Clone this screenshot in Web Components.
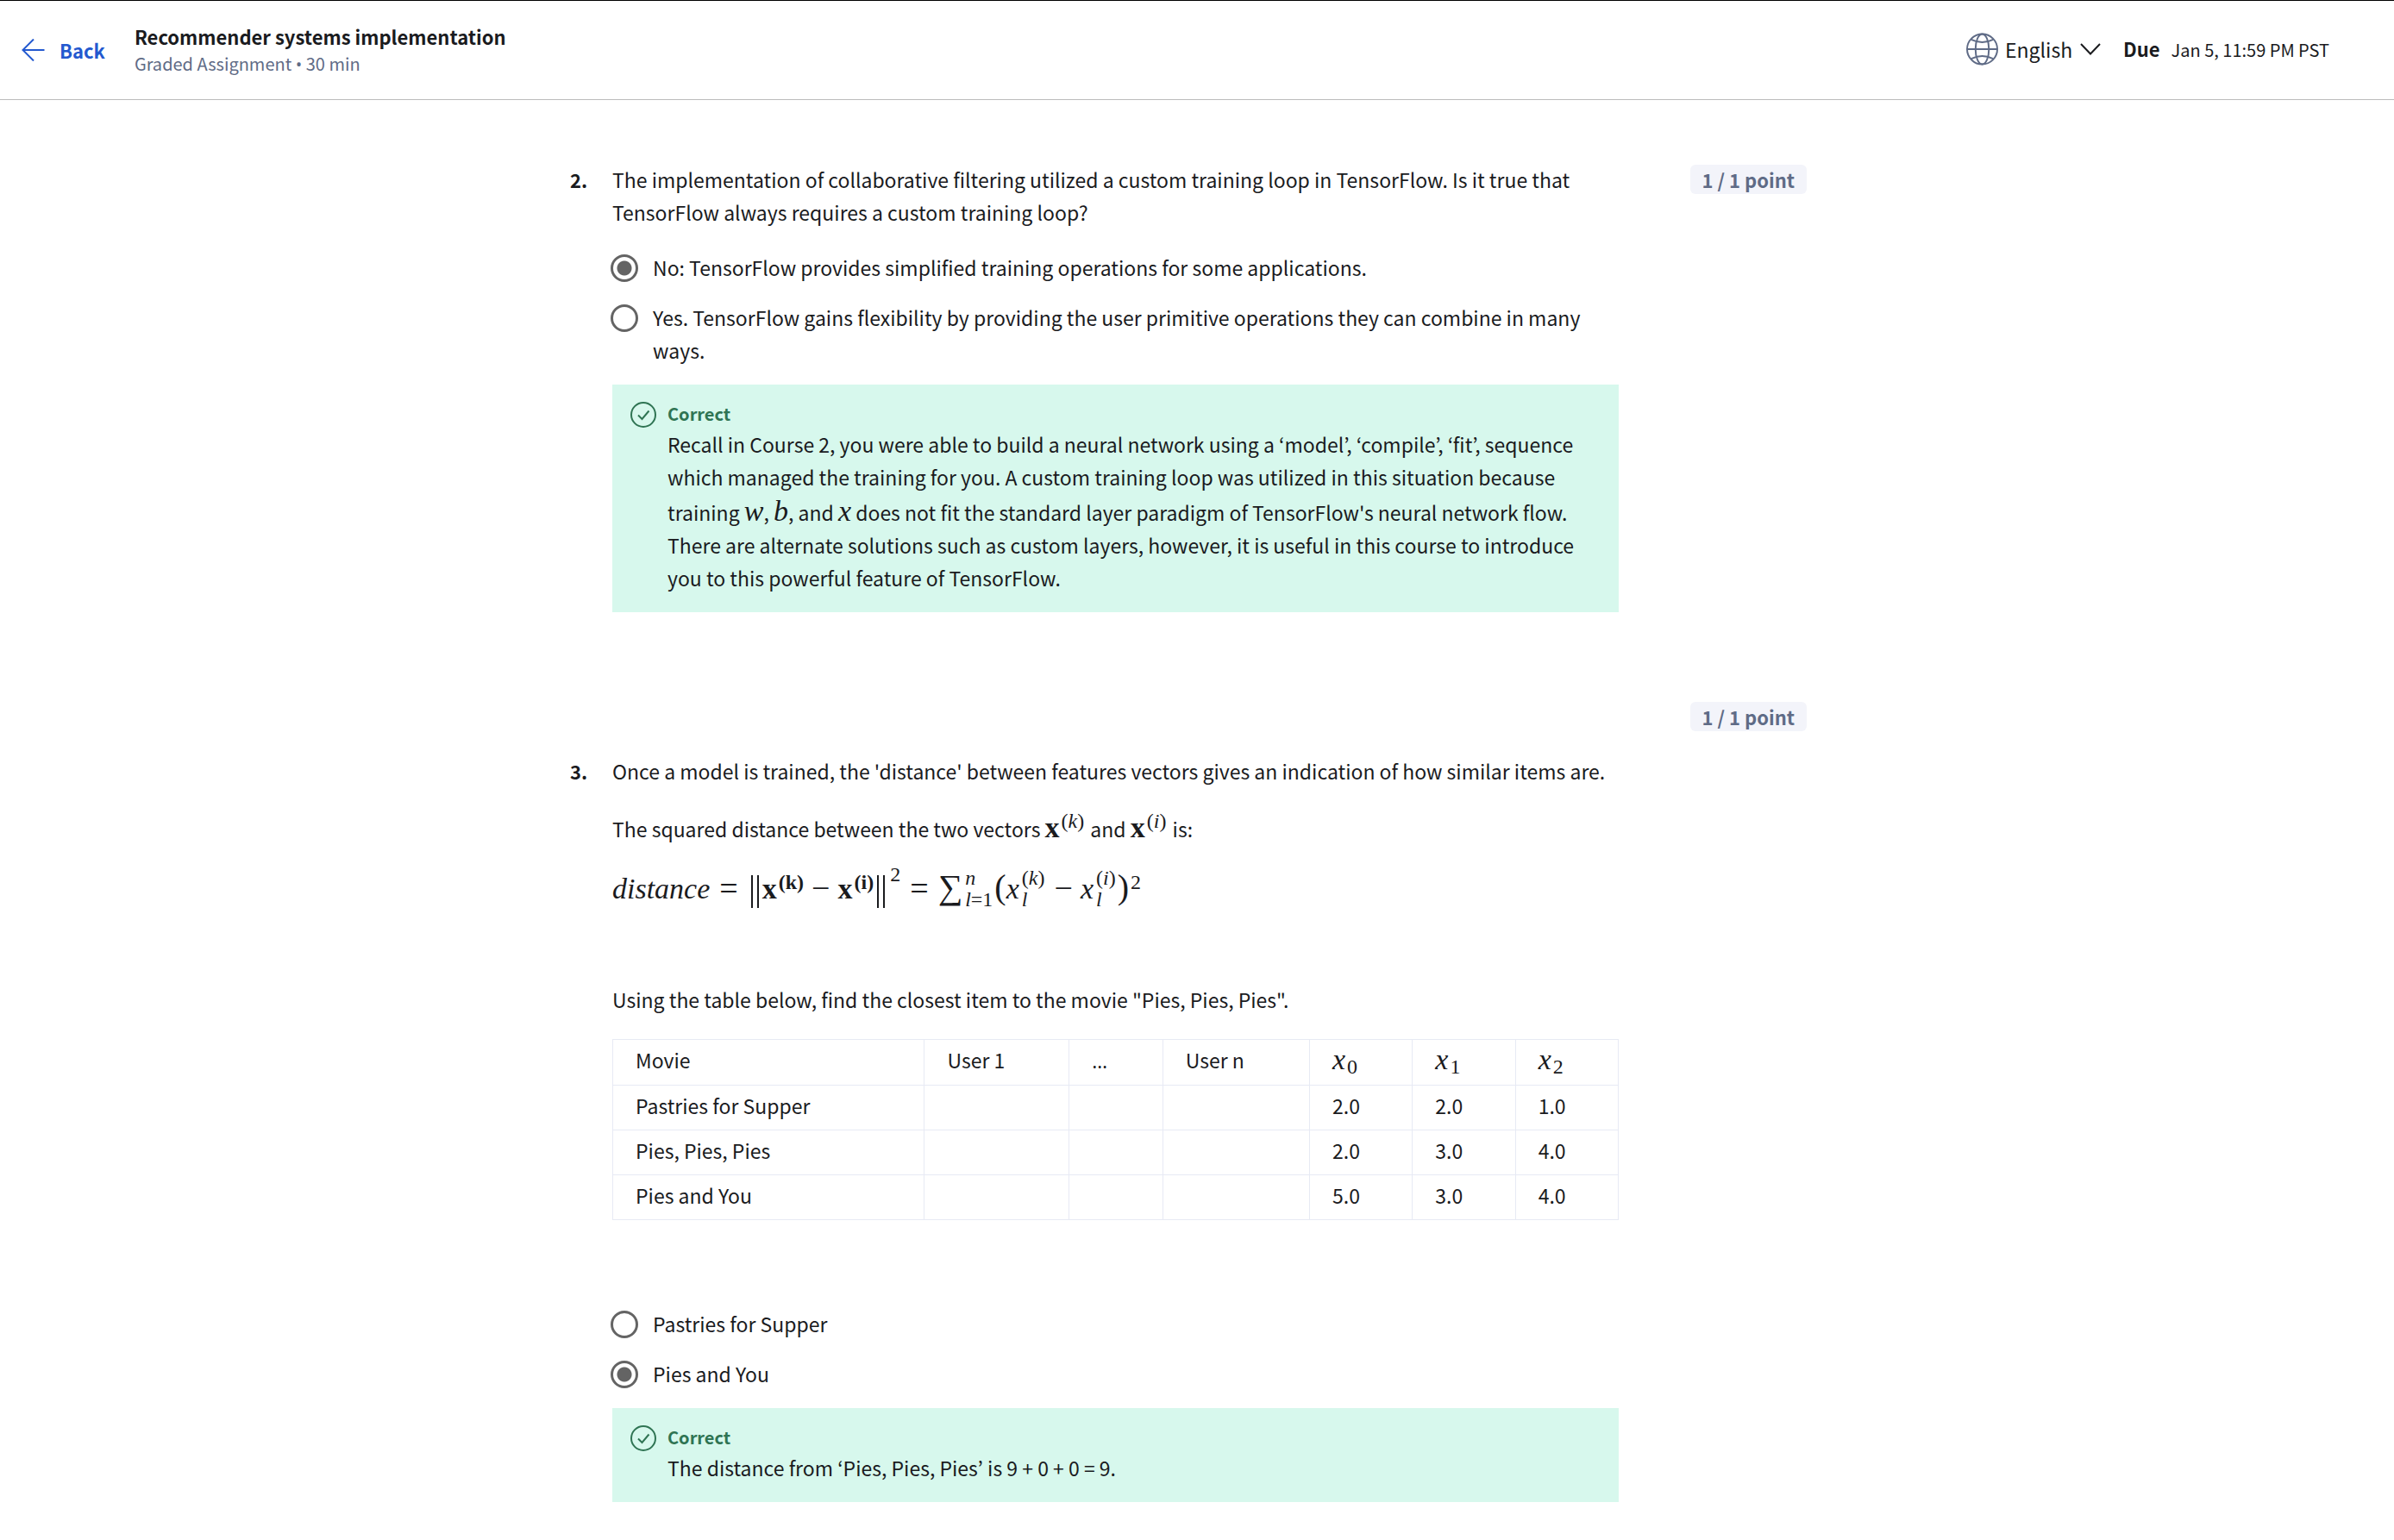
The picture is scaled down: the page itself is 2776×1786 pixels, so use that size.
<!DOCTYPE html>
<html lang="en">
<head>
<meta charset="utf-8">
<meta name="viewport" content="width=device-width, initial-scale=1">
<title>Recommender systems implementation</title>
<style>
  body {
    margin: 0;
    background: #fff;
    color: #1a1b1e;
    font: 400 23px/38px "Noto Sans CJK KR", "Noto Sans", sans-serif;
    --ink-soft: #5f6b86;
    --blue: #2359cf;
    --green: #2f7453;
    --green-bg: #d7f8ed;
    --chip-bg: #f3f4fa;
    --rule: #e7eaf4;
    --ring: #646464;
  }
  p { margin: 0 0 26px; }
  .dot { font-family: "Open Sans", sans-serif; line-height: 1; }
</style>
</head>
<body>
<quiz-page>
  <quiz-header slot="header" heading="Recommender systems implementation" due="Jan 5, 11:59 PM PST">Graded Assignment <span class="dot">•</span> 30 min</quiz-header>

  <quiz-question number="2." points="1 / 1 point">
    <p>The implementation of collaborative filtering utilized a custom training loop in TensorFlow. Is it true that TensorFlow always requires a custom training loop?</p>
    <quiz-choices slot="choices" name="q2" chosen="0"
      options='["No: TensorFlow provides simplified training operations for some applications.","Yes. TensorFlow gains flexibility by providing the user primitive operations they can combine in many ways."]'></quiz-choices>
    <quiz-feedback slot="feedback">Recall in Course 2, you were able to build a neural network using a ‘model’, ‘compile’, ‘fit’, sequence which managed the training for you. A custom training loop was utilized in this situation because training <math-term base="w"></math-term>, <math-term base="b"></math-term>, and <math-term base="x"></math-term> does not fit the standard layer paradigm of TensorFlow's neural network flow. There are alternate solutions such as custom layers, however, it is useful in this course to introduce you to this powerful feature of TensorFlow.</quiz-feedback>
  </quiz-question>

  <quiz-question number="3." points="1 / 1 point" spaced>
    <p>Once a model is trained, the 'distance' between features vectors gives an indication of how similar items are.</p>
    <p>The squared distance between the two vectors <math-term bold base="x" sup="k"></math-term> and <math-term bold base="x" sup="i"></math-term> is:</p>
    <distance-formula></distance-formula>
    <p>Using the table below, find the closest item to the movie "Pies, Pies, Pies".</p>
    <movie-table></movie-table>
    <quiz-choices slot="choices" name="q3" chosen="1" options='["Pastries for Supper","Pies and You"]'></quiz-choices>
    <quiz-feedback slot="feedback">The distance from ‘Pies, Pies, Pies’ is 9 + 0 + 0 = 9.</quiz-feedback>
  </quiz-question>
</quiz-page>

<script>
class QuizPage extends HTMLElement {
  constructor() {
    super();
    this.attachShadow({ mode: "open" }).innerHTML = `
      <style>
        :host { display: block; }
        main {
          box-sizing: border-box;
          max-width: 1434px;
          margin: 0 auto;
          padding: 73px 0 46px;
          display: flex;
          flex-direction: column;
          gap: 102px;
        }
        .frame { padding-right: 20px; }
      </style>
      <slot name="header"></slot>
      <div class="frame"><main><slot></slot></main></div>`;
  }
}

class QuizHeader extends HTMLElement {
  connectedCallback() {
    this.attachShadow({ mode: "open" }).innerHTML = `
      <style>
        :host { display: block; }
        header {
          display: flex;
          justify-content: space-between;
          align-items: center;
          box-sizing: border-box;
          height: 116px;
          padding: 0 75px 0 25px;
          border-top: 1px solid #000;
          border-bottom: 1px solid #bcbcbc;
        }
        .left, .right, a, .lang { display: flex; align-items: center; }
        .left { gap: 34px; }
        a { gap: 17px; color: var(--blue); text-decoration: none; font-size: 22px; font-weight: 700; }
        h1 { margin: 0; font-size: 22px; line-height: 31px; font-weight: 700; }
        .kind { color: var(--ink-soft); font-size: 20px; line-height: 32px; }
        svg { display: block; fill: none; }
        .right { gap: 26px; padding-bottom: 2px; }
        .lang { gap: 8px; }
        select {
          appearance: none; border: 0; padding: 0; margin: 0; background: none;
          font: inherit; color: inherit;
        }
        .due { display: flex; align-items: baseline; gap: 13px; }
        .due b { font-size: 22px; }
        .due time { font-size: 20px; }
      </style>
      <header>
        <div class="left">
          <a href="#back">
            <svg width="27" height="26" viewBox="0 0 27 26" stroke="currentColor" stroke-width="2"><path d="M14 0.5 1.5 13 14 25.5M1.5 13H26.5"/></svg>
            <span>Back</span>
          </a>
          <div><h1></h1><div class="kind"><slot></slot></div></div>
        </div>
        <div class="right">
          <div class="lang">
            <svg width="37" height="38" viewBox="0 0 38 38" stroke="#5f6b86" stroke-width="2">
              <circle cx="19" cy="19" r="18"/><ellipse cx="19" cy="19" rx="8" ry="18"/>
              <path d="M1 19h36M6 7.500Q19 14 32 7.500M6 30.500Q19 24 32 30.500"/>
            </svg>
            <select aria-label="Language"><option>English</option></select>
            <svg width="24" height="14" viewBox="0 0 24 14" stroke="#1a1b1e" stroke-width="2"><path d="M1 1 12 12.5 23 1"/></svg>
          </div>
          <div class="due"><b>Due</b><time></time></div>
        </div>
      </header>`;
    const $ = s => this.shadowRoot.querySelector(s);
    $("h1").textContent = this.getAttribute("heading");
    $("time").textContent = this.getAttribute("due");
  }
}

class QuizQuestion extends HTMLElement {
  connectedCallback() {
    this.attachShadow({ mode: "open" }).innerHTML = `
      <style>
        :host { display: block; }
        section { display: flex; align-items: flex-start; }
        .number { flex: 0 0 49px; font-size: 22px; font-weight: 700; }
        .body { flex: 1 1 0; min-width: 0; max-width: 1167px; display: flex; flex-direction: column; }
        :host([spaced]) .number, :host([spaced]) .body { margin-top: 63px; }
        :host([spaced]) .prompt { margin-bottom: 101px; }
        .side { flex: 0 0 auto; margin-left: auto; padding-top: 2px; }
        .points {
          display: block; padding: 0 14px; border-radius: 6px;
          background: var(--chip-bg); color: var(--ink-soft);
          font-size: 22px; line-height: 34px; font-weight: 700;
        }
        .feedback { margin-top: 21px; }
      </style>
      <section>
        <div class="number"></div>
        <div class="body">
          <div class="prompt"><slot></slot></div>
          <slot name="choices"></slot>
          <div class="feedback"><slot name="feedback"></slot></div>
        </div>
        <div class="side"><span class="points"></span></div>
      </section>`;
    this.shadowRoot.querySelector(".number").textContent = this.getAttribute("number");
    this.shadowRoot.querySelector(".points").textContent = this.getAttribute("points");
  }
}

class QuizChoices extends HTMLElement {
  connectedCallback() {
    const root = this.attachShadow({ mode: "open" });
    root.innerHTML = `
      <style>
        :host { display: flex; flex-direction: column; gap: 20px; }
        label { display: flex; align-items: flex-start; gap: 17px; padding-right: 30px; }
        input {
          appearance: none; box-sizing: border-box; flex: none;
          width: 32px; height: 32px; margin: 4px 0 0 -2px;
          border: 3px solid var(--ring); border-radius: 50%; background: #fff;
        }
        input:checked { background: radial-gradient(circle, var(--ring) 8px, #fff 9px); }
      </style>`;
    const chosen = Number(this.getAttribute("chosen"));
    JSON.parse(this.getAttribute("options")).forEach((text, i) => {
      const label = document.createElement("label");
      const input = document.createElement("input");
      const span = document.createElement("span");
      input.type = "radio";
      input.name = this.getAttribute("name");
      input.checked = i === chosen;
      span.textContent = text;
      label.append(input, span);
      root.append(label);
    });
  }
}

class QuizFeedback extends HTMLElement {
  constructor() {
    super();
    this.attachShadow({ mode: "open" }).innerHTML = `
      <style>
        :host { display: flex; align-items: flex-start; gap: 13px; padding: 18px 44px 21px 21px; background: var(--green-bg); }
        svg { flex: none; margin-top: 2px; fill: none; stroke: var(--green); stroke-width: 2; }
        strong { display: block; color: var(--green); font-size: 20px; line-height: 32px; }
      </style>
      <svg width="30" height="30" viewBox="0 0 30 30"><circle cx="15" cy="15" r="14"/><path d="M9 15.5 13.5 20 21.5 10.5"/></svg>
      <div><strong>Correct</strong><div><slot></slot></div></div>`;
  }
}

const mathCss = `
  .m { font-family: "Liberation Serif", serif; font-size: 34px; line-height: var(--math-line, 41px); font-style: italic; white-space: nowrap; }
  .rm { font-style: normal; }
  .bold { font-style: normal; font-weight: 700; }
  .m.up, .m.down, .up { font-size: 24px; line-height: 0; }
  .up { vertical-align: 11px; margin-left: 2px; }
  .down { vertical-align: -5px; margin-left: 2px; }
`;

class MathTerm extends HTMLElement {
  connectedCallback() {
    const bold = this.hasAttribute("bold") ? " bold" : "";
    const sup = this.getAttribute("sup"), sub = this.getAttribute("sub");
    this.attachShadow({ mode: "open" }).innerHTML = `
      <style>:host { display: inline; } ${mathCss} .up { margin-right: 2px; }</style><span class="m${bold}">${this.getAttribute("base")}</span>`
      + (sup ? `<span class="m up"><span class="rm">(</span>${sup}<span class="rm">)</span></span>` : "")
      + (sub ? `<span class="m rm down">${sub}</span>` : "");
  }
}

class DistanceFormula extends HTMLElement {
  constructor() {
    super();
    this.attachShadow({ mode: "open" }).innerHTML = `
      <style>
        :host { display: block; margin-bottom: 84px; --math-line: 48px; }
        ${mathCss}
        .norm { display: inline-block; box-sizing: border-box; width: 9px; height: 38px; border: solid currentColor; border-width: 0 2px; vertical-align: -11px; margin: 0 4px; }
        .rel, .bin { font-size: 38px; line-height: 0; vertical-align: -1px; }
        .rel { margin: 0 11px; }
        .bin { margin: 0 9px; }
        .high { vertical-align: 20px; }
        .big { font-size: 40px; line-height: 0; }
        .stack { display: inline-flex; flex-direction: column; font-size: 24px; line-height: 25px; vertical-align: 16px; margin: 0 2px 0 3px; }
      </style>
      <div class="m">distance<span class="rm rel">=</span><span class="norm"></span><span class="bold">x</span><span class="bold up">(k)</span><span class="rm bin">−</span><span class="bold">x</span><span class="bold up">(i)</span><span class="norm"></span><span class="rm up high">2</span><span class="rm rel">=</span><span class="rm big">∑</span><span class="stack"><span>n</span><span>l<span class="rm">=1</span></span></span><span class="rm big">(</span>x<span class="stack"><span><span class="rm">(</span>k<span class="rm">)</span></span><span>l</span></span><span class="rm bin">−</span>x<span class="stack"><span><span class="rm">(</span>i<span class="rm">)</span></span><span>l</span></span><span class="rm big">)</span><span class="rm up">2</span></div>`;
  }
}

class MovieTable extends HTMLElement {
  constructor() {
    super();
    const rows = [["Pastries for Supper", "2.0", "2.0", "1.0"], ["Pies, Pies, Pies", "2.0", "3.0", "4.0"], ["Pies and You", "5.0", "3.0", "4.0"]];
    this.attachShadow({ mode: "open" }).innerHTML = `
      <style>
        :host { display: block; margin-top: 27px; --math-line: 36px; }
        table { width: 100%; table-layout: fixed; border-collapse: collapse; line-height: 37px; }
        th, td { box-sizing: border-box; padding: 5px 0 9px 26px; border: 1px solid var(--rule); text-align: left; vertical-align: top; font-weight: 400; height: 52px; }
        .movie { width: 31%; } .first { width: 14.4%; } .dots { width: 9.3%; } .last { width: 14.6%; }
        .dots span { font-family: "Open Sans", sans-serif; line-height: 1; }
      </style>
      <table>
        <thead><tr><th class="movie">Movie</th><th class="first">User 1</th><th class="dots"><span>…</span></th><th class="last">User n</th>
          ${[0, 1, 2].map(n => `<th><math-term base="x" sub="${n}"></math-term></th>`).join("")}</tr></thead>
        <tbody>${rows.map(([m, ...v]) => `<tr><td>${m}</td><td></td><td></td><td></td>${v.map(x => `<td>${x}</td>`).join("")}</tr>`).join("")}</tbody>
      </table>`;
  }
}

customElements.define("quiz-page", QuizPage);
customElements.define("quiz-header", QuizHeader);
customElements.define("quiz-question", QuizQuestion);
customElements.define("quiz-choices", QuizChoices);
customElements.define("quiz-feedback", QuizFeedback);
customElements.define("math-term", MathTerm);
customElements.define("distance-formula", DistanceFormula);
customElements.define("movie-table", MovieTable);
</script>
</body>
</html>
